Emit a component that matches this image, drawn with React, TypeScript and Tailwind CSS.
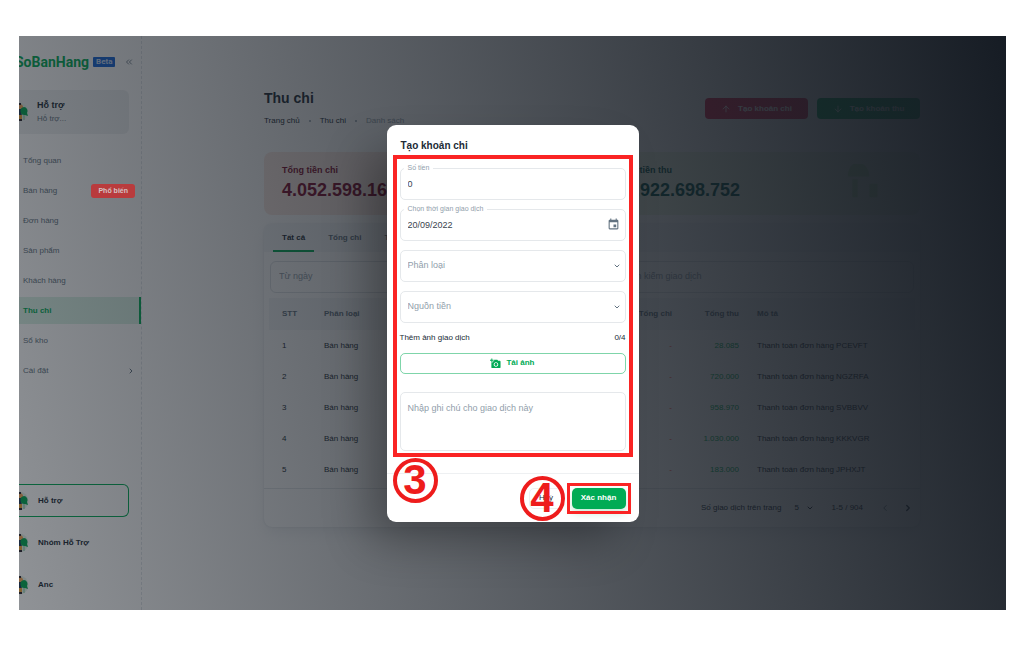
import { useState } from 'react';
import { ArrowDown, ArrowUp, ChevronDown, ChevronLeft, ChevronRight, ChevronsLeft, Search } from 'lucide-react';
import { MdAddAPhoto, MdEvent } from 'react-icons/md';

const navItems = [
  { label: 'Tổng quan' },
  { label: 'Bán hàng', badge: 'Phổ biến' },
  { label: 'Đơn hàng' },
  { label: 'Sản phẩm' },
  { label: 'Khách hàng' },
  { label: 'Thu chi', active: true },
  { label: 'Sổ kho' },
  { label: 'Cài đặt', hasChildren: true },
];

const rows = [
  { id: 1, income: '28.085', note: 'Thanh toán đơn hàng PCEVFT' },
  { id: 2, income: '720.000', note: 'Thanh toán đơn hàng NGZRFA' },
  { id: 3, income: '958.970', note: 'Thanh toán đơn hàng SVBBVV' },
  { id: 4, income: '1.030.000', note: 'Thanh toán đơn hàng KKKVGR' },
  { id: 5, income: '183.000', note: 'Thanh toán đơn hàng JPHXJT' },
];

function Avatar() {
  return (
    <svg viewBox="0 0 20 20" className="-ml-2.5 h-5 w-5 shrink-0" aria-hidden="true">
      <circle cx="10" cy="10" r="9.500" fill="#e3f1e9" />
      <path d="M8 2h4l2 2v4H8z" fill="#f2a65a" />
      <path d="M8 1h4v2H8z" fill="#2b2430" />
      <path d="M8 7h4l1 7H8z" fill="#1d3557" />
      <path d="M8 13h5v5H8z" fill="#e8a23d" />
      <path d="M10 17h3v2h-3z" fill="#2b2430" />
      <path d="M15 5a3.500 4 0 0 1 3 6l1 3-3-1a4 4 0 0 1-1-8z" fill="#00a651" />
      <path d="M15 13v5" stroke="#7fc8a0" strokeWidth="1" />
    </svg>
  );
}

function Sidebar() {
  return (
    <aside className="flex w-[123px] shrink-0 flex-col border-r border-dashed border-[#dfe3e8] pb-[9px]">
      <div className="mt-3.5 flex h-6 items-center pr-[7px]">
        <span className="-ml-1 font-['Roboto'] text-[14px] leading-none font-bold text-[#00ab55]">SoBanHang</span>
        <span className="ml-1 rounded-[1px] bg-[#1565d8] px-[3px] font-['Roboto'] text-[8px] leading-[10px] font-bold text-[#c9dcf7]">
          Beta
        </span>
        <button type="button" aria-label="Thu gọn" className="ml-auto text-[#637381]">
          <ChevronsLeft className="h-[10px] w-[10px]" />
        </button>
      </div>

      <div className="mt-4 mr-3 flex h-11 items-center gap-2 rounded-r-md bg-[#919eab]/15">
        <Avatar />
        <div>
          <p className="text-[9px] leading-[13px] font-bold text-[#212b36]">Hỗ trợ</p>
          <p className="text-[8px] leading-[13px] text-[#637381]">Hỗ trợ...</p>
        </div>
      </div>

      <nav className="mt-[13px] flex flex-col gap-[3px]">
        {navItems.map((item) => (
          <a
            key={item.label}
            href="#"
            className={
              item.active
                ? 'flex h-[27px] items-center border-r-2 border-[#00ab55] bg-[#00ab55]/15 pl-1 text-[8px] font-bold text-[#00ab55]'
                : 'flex h-[27px] items-center pr-1.5 pl-1 text-[8px] text-[#637381]'
            }
          >
            <span>{item.label}</span>
            {item.badge && (
              <span className="relative z-20 ml-auto rounded-[3px] bg-[#b93b3d] px-[7px] text-[7px] leading-[14px] font-bold text-[#d5c3c4]">
                {item.badge}
              </span>
            )}
            {item.hasChildren && <ChevronRight className="ml-auto h-2 w-2" strokeWidth={3} />}
          </a>
        ))}
      </nav>

      <div className="mt-auto flex flex-col gap-[9px] pr-3">
        {['Hỗ trợ', 'Nhóm Hỗ Trợ', 'Anc'].map((name, i) => (
          <a
            key={name}
            href="#"
            className={
              i === 0
                ? 'flex h-[33px] items-center gap-[9px] rounded-r-md border border-l-0 border-[#00ab55] text-[8px] font-bold text-[#212b36]'
                : 'flex h-[33px] items-center gap-[9px] text-[8px] font-bold text-[#212b36]'
            }
          >
            <Avatar />
            {name}
          </a>
        ))}
      </div>
    </aside>
  );
}

function PageHeader() {
  return (
    <div className="flex items-start justify-between">
      <div>
        <h1 className="text-[14px] leading-6 font-bold text-[#212b36]">Thu chi</h1>
        <nav className="mt-1.5 flex items-center gap-[9px] text-[8px] leading-[10px] text-[#212b36]">
          <a href="#">Trang chủ</a>
          <span className="h-0.5 w-0.5 rounded-full bg-[#919eab]" />
          <a href="#">Thu chi</a>
          <span className="h-0.5 w-0.5 rounded-full bg-[#919eab]" />
          <span className="text-[#919eab]">Danh sách</span>
        </nav>
      </div>
      <div className="mt-3 flex gap-[9px]">
        <button type="button" className="flex h-[21px] w-[103px] items-center justify-center gap-[7px] rounded-[4px] bg-[#e0224e] text-[8px] font-bold text-white">
          <ArrowUp className="h-[10px] w-[10px]" />
          Tạo khoản chi
        </button>
        <button type="button" className="flex h-[21px] w-[103px] items-center justify-center gap-[7px] rounded-[4px] bg-[#00ab55] text-[8px] font-bold text-white">
          <ArrowDown className="h-[10px] w-[10px]" />
          Tạo khoản thu
        </button>
      </div>
    </div>
  );
}

function Summary() {
  return (
    <div className="mt-[26px] grid grid-cols-2 gap-[10px]">
      <div className="rounded-lg bg-[#fae9e3] px-[18px] pt-3 pb-[13px] text-[#7a0c2e]">
        <p className="text-[9px] leading-3 font-bold">Tổng tiền chi</p>
        <p className="mt-0.5 text-[18px] leading-6 font-bold">4.052.598.165</p>
      </div>
      <div className="flex items-start justify-between rounded-lg bg-[#edf7e4] px-[18px] pt-3 pb-[13px] text-[#005249]">
        <div>
          <p className="text-[9px] leading-3 font-bold">Tổng tiền thu</p>
          <p className="mt-0.5 text-[18px] leading-6 font-bold">12.922.698.752</p>
        </div>
        <svg viewBox="0 0 40 40" className="mr-5 h-9 w-9 text-[#c5ecb4]" fill="currentColor" aria-hidden="true">
          <path d="M8 0h10c5 2 8 8 8 14H2C2 8 4 3 8 0zM7 17h6v20H7zM26 22h9v15h-9z" />
        </svg>
      </div>
    </div>
  );
}

function Transactions() {
  const field = 'flex h-8 items-center rounded-md border border-[#919eab]/30 px-2 text-[9px]';
  const input = 'w-full min-w-0 bg-transparent text-[9px] outline-none placeholder:text-[#919eab]';
  const th = 'px-[9px] text-[8px] font-bold text-[#637381]';

  return (
    <section className="mt-[9px] rounded-lg shadow-[0_0_2px_rgba(145,158,171,0.3),0_7px_14px_-2px_rgba(145,158,171,0.16)]">
      <div className="flex h-7 gap-[5px] rounded-t-lg bg-[#f4f6f8] pl-[9px] text-[8px] font-bold text-[#637381]">
        <button type="button" className="border-b-2 border-[#00ab55] px-[9px] pt-0.5 text-[#212b36]">Tất cả</button>
        <button type="button" className="px-[9px]">Tổng chi</button>
        <button type="button" className="px-[9px]">Tổng thu</button>
      </div>

      <div className="mt-[9px] grid grid-cols-[1fr_1fr_2fr] gap-[9px] px-1.5">
        <div className={field}>
          <input aria-label="Từ ngày" placeholder="Từ ngày" className={input} />
        </div>
        <div className={field}>
          <input aria-label="Đến ngày" placeholder="Đến ngày" className={input} />
        </div>
        <div className={field}>
          <Search className="mr-1 h-3 w-3 shrink-0 text-[#919eab]" />
          <input aria-label="Tìm kiếm" placeholder="Tìm kiếm giao dịch" className={input} />
        </div>
      </div>

      <div className="mt-[5px] px-[5px]">
        <table className="w-full table-fixed text-left text-[8px] text-[#212b36]">
          <thead>
            <tr className="h-8 bg-[#f4f6f8]">
              <th className="w-[46px] pl-[13px] text-[8px] font-bold text-[#637381]">STT</th>
              <th className={`${th} w-[85px]`}>Phân loại</th>
              <th className={`${th} w-[100px]`}>Nguồn tiền</th>
              <th className={`${th} w-[100px]`}>Thời gian</th>
              <th className={`${th} w-[81px] text-right`}>Tổng chi</th>
              <th className={`${th} w-[67px] text-right`}>Tổng thu</th>
              <th className={th}>Mô tả</th>
            </tr>
          </thead>
          <tbody>
            {rows.map((row) => (
              <tr key={row.id} className="h-[31px]">
                <td className="pl-[13px]">{row.id}</td>
                <td className="px-[9px]">Bán hàng</td>
                <td className="px-[9px]">Tiền mặt</td>
                <td className="px-[9px]">20/09/2022</td>
                <td className="px-[9px] text-right text-[#ff4842]">-</td>
                <td className="px-[9px] text-right text-[#00ab55]">{row.income}</td>
                <td className="px-[9px] whitespace-nowrap">{row.note}</td>
              </tr>
            ))}
          </tbody>
        </table>
      </div>

      <div className="mt-[3px] flex h-[39px] items-center justify-end border-t border-[#919eab]/25 pr-[7px] text-[8px] text-[#212b36]">
        <label htmlFor="page-size">Số giao dịch trên trang</label>
        <div className="relative ml-[13px] flex items-center">
          <select id="page-size" defaultValue="5" className="w-5 appearance-none bg-transparent outline-none">
            <option>5</option>
          </select>
          <ChevronDown className="pointer-events-none absolute right-0 h-2 w-2" strokeWidth={3} />
        </div>
        <span className="ml-[17px]">1-5 / 904</span>
        <button type="button" aria-label="Trang trước" className="ml-[17px] text-[#637381]">
          <ChevronLeft className="h-[10px] w-[10px]" />
        </button>
        <button type="button" aria-label="Trang sau" className="ml-[13px]">
          <ChevronRight className="h-[10px] w-[10px]" strokeWidth={3} />
        </button>
      </div>
    </section>
  );
}

function SelectField({ label }: { label: string }) {
  return (
    <div className="relative flex items-center">
      <select
        aria-label={label}
        defaultValue=""
        className="h-8 w-full appearance-none rounded-[5px] border border-[#e5e8eb] bg-white px-[7px] text-[9px] text-[#919eab] outline-none"
      >
        <option value="">{label}</option>
      </select>
      <ChevronDown className="pointer-events-none absolute right-[5px] h-2 w-2 text-[#637381]" strokeWidth={3} />
    </div>
  );
}

function ExpenseDialog() {
  const [amount, setAmount] = useState('0');
  const [date, setDate] = useState('20/09/2022');
  const [note, setNote] = useState('');
  const box = 'h-8 w-full rounded-[5px] border border-[#e5e8eb] px-[7px] text-[9px] text-[#3a444e] outline-none';
  const floating = 'absolute -top-1 left-1 bg-white px-1 text-[7px] leading-2 text-[#919eab]';
  const step =
    'absolute flex h-[45px] w-[45px] items-center justify-center rounded-full border-4 border-[#ee1c1c] text-[42px] leading-none font-bold text-[#ee1c1c]';

  return (
    <div
      role="dialog"
      aria-label="Tạo khoản chi"
      className="relative w-[252px] rounded-[9px] bg-white shadow-[-23px_23px_46px_-5px_rgba(0,0,0,0.3)]"
    >
      <h2 className="px-3.5 pt-3.5 text-[10px] leading-[14px] font-bold text-[#212b36]">Tạo khoản chi</h2>

      <form className="relative mx-[13px] mt-[15px]">
        <div className="flex flex-col gap-[9px]">
          <div className="relative">
            <input id="amount" value={amount} onChange={(e) => setAmount(e.target.value)} className={`${box} block`} />
            <label htmlFor="amount" className={floating}>Số tiền</label>
          </div>
          <div className="relative flex items-center">
            <input id="date" value={date} onChange={(e) => setDate(e.target.value)} className={box} />
            <label htmlFor="date" className={floating}>Chọn thời gian giao dịch</label>
            <MdEvent className="absolute right-1.5 h-[13px] w-[13px] text-[#637381]" />
          </div>
          <SelectField label="Phân loại" />
          <SelectField label="Nguồn tiền" />
        </div>

        <div className="mt-[9px] flex justify-between text-[8px] leading-3 text-[#212b36]">
          <span>Thêm ảnh giao dịch</span>
          <span>0/4</span>
        </div>
        <button type="button" className="mt-[9px] flex h-[21px] w-full items-center justify-center gap-[5px] rounded-[5px] border border-[#00ab55]/50 text-[8px] font-bold text-[#00ab55]">
          <MdAddAPhoto className="h-[11px] w-[11px]" />
          Tải ảnh
        </button>
        <textarea
          aria-label="Ghi chú"
          value={note}
          onChange={(e) => setNote(e.target.value)}
          placeholder="Nhập ghi chú cho giao dịch này"
          className="mt-[18px] block h-[59px] w-full resize-none rounded-[5px] border border-[#e5e8eb] px-[7px] py-[9px] text-[9px] leading-3 outline-none placeholder:text-[#919eab]"
        />
        <div className="pointer-events-none absolute -inset-x-[7px] -top-[13px] -bottom-1.5 border-4 border-[#fa2424]" />
      </form>

      <div className="relative mt-[22px] flex justify-end gap-2 border-t border-[#eef0f2] px-[13px] pt-3.5 pb-[13px]">
        <button type="button" className="h-[21px] w-[35px] rounded-[5px] border border-[#eef0f2] text-[8px] text-[#212b36]">Huỷ</button>
        <div className="relative">
          <button type="button" className="block h-[21px] w-[54px] rounded-[5px] bg-[#00ab55] text-[8px] font-bold text-white shadow-[0_4px_8px_rgba(0,171,85,0.24)]">
            Xác nhận
          </button>
          <div className="pointer-events-none absolute -inset-[5px] border-3 border-[#fa2424]" />
        </div>
        <span className={`${step} -top-4 left-1.5`}>3</span>
        <span className={`${step} right-[74px] bottom-px`}>4</span>
      </div>
    </div>
  );
}

export default function App() {
  return (
    <div className="min-h-screen bg-white pt-9 pr-[18px] pb-[37px] pl-[19px] font-['Liberation_Sans',sans-serif]">
      <div className="relative flex min-h-[calc(100vh-73px)] overflow-hidden bg-white">
        <Sidebar />
        <main className="min-w-0 flex-1 pt-[50px] pr-[86px] pb-20 pl-[122px]">
          <PageHeader />
          <Summary />
          <Transactions />
        </main>
        <div className="absolute inset-0 z-10 flex items-center justify-center bg-[linear-gradient(75deg,rgba(22,28,36,0.48)_0%,rgb(22,28,36)_100%)]">
          <ExpenseDialog />
        </div>
      </div>
    </div>
  );
}
